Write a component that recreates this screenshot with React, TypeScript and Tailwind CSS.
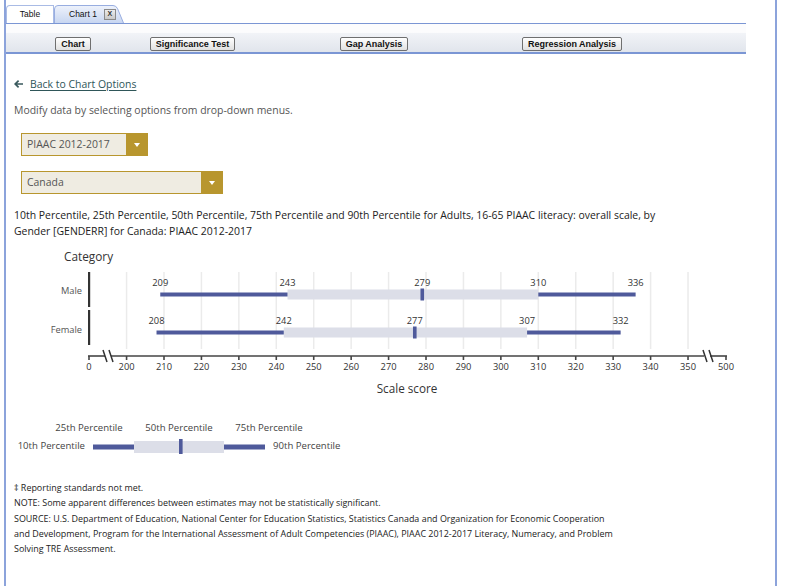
import React from "react";

const sx = (v: number) => 164 + (v - 210) * 3.743;

const ticks = [200, 210, 220, 230, 240, 250, 260, 270, 280, 290, 300, 310, 320, 330, 340, 350];

const rows = [
    {label: "Male", y: 294.5, labelY: 292, top: 272, vals: [209, 243, 279, 310, 336]},
    {label: "Female", y: 332.5, labelY: 331, top: 310, vals: [208, 242, 277, 307, 332]}
];

const BAR = "#4f5a9b";
const BOX = "#dcdee8";

function BreakMark({x}: {x: number}) {
    return (
        <g stroke="#333" strokeWidth={1.5}>
            <line x1={x} y1={350} x2={x + 4} y2={362} />
            <line x1={x + 6} y1={350} x2={x + 10} y2={362} />
        </g>
    );
}

function Chart() {
    return (
        <svg width={740} height={160} className="block" style={{fontFamily: "'Open Sans', sans-serif"}}>
            <g transform="translate(-6,-245)">
                <text x={64} y={261} fontSize={11.8} fill="#333" fontWeight={500}>Category</text>
                {ticks.map((t) => (
                    <line key={t} x1={sx(t)} x2={sx(t)} y1={272} y2={349} stroke="#ebebeb" strokeWidth={1.5} />
                ))}
                {rows.map((r) => {
                    const [p10, p25, p50, p75, p90] = r.vals;
                    return (
                        <g key={r.label}>
                            <rect x={88} y={r.top} width={2.2} height={35} fill="#333" />
                            <text x={82} y={r.labelY} fontSize={9.3} fill="#555" textAnchor="end" dominantBaseline="middle">
                                {r.label}
                            </text>
                            <rect x={sx(p25)} y={r.y - 5} width={sx(p75) - sx(p25)} height={10} fill={BOX} />
                            <rect x={sx(p10)} y={r.y - 2} width={sx(p25) - sx(p10)} height={4} fill={BAR} />
                            <rect x={sx(p75)} y={r.y - 2} width={sx(p90) - sx(p75)} height={4} fill={BAR} />
                            <rect x={sx(p50) - 1.8} y={r.y - 6} width={3.6} height={12} fill={BAR} />
                            {r.vals.map((v) => (
                                <text key={v} x={sx(v)} y={r.y - 11} fontSize={9.3} fill="#333" textAnchor="middle" dominantBaseline="middle">
                                    {v}
                                </text>
                            ))}
                        </g>
                    );
                })}
                <g stroke="#444" strokeWidth={1.6}>
                    <line x1={88} y1={356} x2={105} y2={356} />
                    <line x1={111} y1={356} x2={704} y2={356} />
                    <line x1={710} y1={356} x2={727} y2={356} />
                    <line x1={89} y1={356} x2={89} y2={360} />
                    <line x1={726} y1={356} x2={726} y2={360} />
                    {ticks.map((t) => (
                        <line key={t} x1={sx(t)} x2={sx(t)} y1={356} y2={360} />
                    ))}
                </g>
                <BreakMark x={103} />
                <BreakMark x={703} />
                <g fontSize={9.3} fill="#333" textAnchor="middle">
                    <text x={89} y={369.5}>0</text>
                    {ticks.map((t) => (
                        <text key={t} x={sx(t)} y={369.5}>{t}</text>
                    ))}
                    <text x={726} y={369.5}>500</text>
                </g>
                <text x={407} y={393} fontSize={11.7} fill="#333" textAnchor="middle" fontWeight={500}>Scale score</text>
            </g>
        </svg>
    );
}

function Legend() {
    return (
        <svg width={360} height={44} className="block" style={{fontFamily: "'Open Sans', sans-serif"}}>
            <g transform="translate(-6,-416)" fontSize={9.6} fill="#444">
                <text x={89} y={427} textAnchor="middle" dominantBaseline="middle">25th Percentile</text>
                <text x={179} y={427} textAnchor="middle" dominantBaseline="middle">50th Percentile</text>
                <text x={269} y={427} textAnchor="middle" dominantBaseline="middle">75th Percentile</text>
                <text x={85} y={445} textAnchor="end" dominantBaseline="middle">10th Percentile</text>
                <text x={273} y={445} dominantBaseline="middle">90th Percentile</text>
                <rect x={134} y={440} width={90} height={12} fill={BOX} />
                <rect x={93} y={443.5} width={41} height={5} fill={BAR} />
                <rect x={224} y={443.5} width={41} height={5} fill={BAR} />
                <rect x={179} y={438} width={3.6} height={15} fill={BAR} />
            </g>
        </svg>
    );
}

function Select({value, width}: {value: string; width: string}) {
    return (
        <div className={`flex h-[23px] ${width} border border-[#b8962e] bg-[#efece2]`}>
            <div className="flex flex-1 items-center pl-[5px] text-[10.45px] text-[#555]">{value}</div>
            <div className="flex w-[21px] items-center justify-center bg-[#b8962e]">
                <div className="h-0 w-0 border-x-[3.5px] border-t-[4px] border-x-transparent border-t-white" />
            </div>
        </div>
    );
}

export default function App() {
    const btn =
        "flex h-[14px] items-center justify-center rounded-[2px] border border-[#6f6f6f] bg-[linear-gradient(to_bottom,#ffffff,#e1e1e1)] text-[9px] font-bold leading-none text-[#111]";

    return (
        <div className="min-h-[586px] w-[786px] bg-white">
            <div className="ml-[4px] min-h-[586px] w-[773px] border-x-2 border-[#8ca3db]">
                {/* tabs */}
                <div
                    className="flex h-[24px] w-[740px] items-end border-b border-[#7b96d4]"
                    style={{fontFamily: "'Liberation Sans', Arial, sans-serif"}}
                >
                    <div className="flex h-[18px] w-[48px] items-center justify-center rounded-tl-[4px] border border-b-0 border-[#a9bbe5] bg-white text-[8.5px] text-[#111]">
                        Table
                    </div>
                    <div className="relative h-[18px] w-[70px]">
                        <svg className="absolute inset-0" width={70} height={18} viewBox="0 0 70 18">
                            <defs>
                                <linearGradient id="tabg" x1="0" y1="0" x2="0" y2="1">
                                    <stop offset="0" stopColor="#eef2fb" />
                                    <stop offset="1" stopColor="#c8d6f1" />
                                </linearGradient>
                            </defs>
                            <path d="M0.5 18 V4 Q0.5 0.5 4 0.5 H59 Q62 0.5 63.5 3.5 L69.5 18" fill="url(#tabg)" stroke="#98ade0" />
                        </svg>
                        <div className="relative flex h-full items-center pl-[15px] text-[8.5px] text-[#111]">
                            Chart 1
                            <span className="ml-[7px] flex h-[11px] w-[12px] items-center justify-center border border-[#8a8a8a] bg-[linear-gradient(to_bottom,#ececec,#c9c9c9)] text-[7px] font-bold text-[#333]">
                                X
                            </span>
                        </div>
                    </div>
                </div>

                {/* toolbar */}
                <div
                    className="flex h-[30px] w-[740px] items-start border-b-2 border-[#7b96d4] bg-[linear-gradient(to_bottom,#fcfcfd_0%,#fcfcfd_30%,#f1f3f7_34%,#e1e5ec_100%)] pt-[13px]"
                    style={{fontFamily: "'Liberation Sans', Arial, sans-serif"}}
                >
                    <button className={`${btn} ml-[49px] w-[36px]`}>Chart</button>
                    <button className={`${btn} ml-[59px] w-[85px]`}>Significance Test</button>
                    <button className={`${btn} ml-[105px] w-[68px]`}>Gap Analysis</button>
                    <button className={`${btn} ml-[114px] w-[100px]`}>Regression Analysis</button>
                </div>

                {/* content */}
                <div className="pt-[23px]" style={{fontFamily: "'Open Sans', sans-serif"}}>
                    <div className="flex h-[14px] items-center pl-[8px]">
                        <svg width={9} height={8} viewBox="0 0 9 8" fill="#3a5a5e">
                            <path d="M4 0 L0 4 L4 8 L5.2 6.8 L3.2 4.85 H9 V3.15 H3.2 L5.2 1.2 Z" />
                        </svg>
                        <a href="#" className="ml-[7px] text-[10.45px] leading-[14px] text-[#2f5659] underline underline-offset-2">
                            Back to Chart Options
                        </a>
                    </div>
                    <div className="mt-[12px] pl-[8px] text-[10.45px] leading-[14px] text-[#555]">
                        Modify data by selecting options from drop-down menus.
                    </div>
                    <div className="mt-[16px] pl-[15px]">
                        <Select value="PIAAC 2012-2017" width="w-[127px]" />
                    </div>
                    <div className="mt-[15px] pl-[15px]">
                        <Select value="Canada" width="w-[202px]" />
                    </div>
                    <div className="mt-[13px] pl-[8px] text-[10.45px] leading-[16px] text-[#222]">
                        10th Percentile, 25th Percentile, 50th Percentile, 75th Percentile and 90th Percentile for Adults, 16-65 PIAAC literacy: overall scale, by
                        <br />
                        Gender [GENDERR] for Canada: PIAAC 2012-2017
                    </div>
                    <div className="mt-[6px]">
                        <Chart />
                    </div>
                    <div className="mt-[12px]">
                        <Legend />
                    </div>
                    <div className="mt-[19px] pl-[8px] text-[8.95px] leading-[15.3px] text-[#222]">
                        <div>‡ Reporting standards not met.</div>
                        <div>NOTE: Some apparent differences between estimates may not be statistically significant.</div>
                        <div>
                            SOURCE: U.S. Department of Education, National Center for Education Statistics, Statistics Canada and Organization for Economic Cooperation
                        </div>
                        <div>
                            and Development, Program for the International Assessment of Adult Competencies (PIAAC), PIAAC 2012-2017 Literacy, Numeracy, and Problem
                        </div>
                        <div>Solving TRE Assessment.</div>
                    </div>
                </div>
            </div>
        </div>
    );
}
